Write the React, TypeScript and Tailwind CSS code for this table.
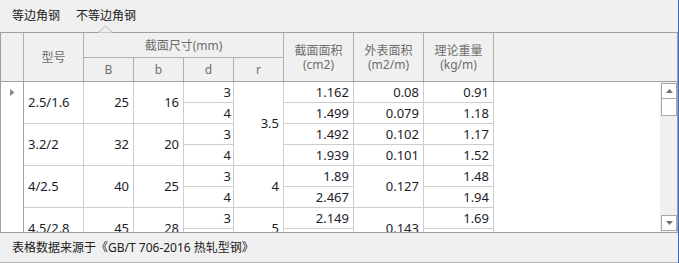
import React from "react";

const F = "font-['Noto_Sans','Noto_Sans_CJK_SC',sans-serif]";

type Cell = { t: string; span?: number; left?: boolean; pr?: string };

const cells: Cell[] = [
  { t: "2.5/1.6", span: 2, left: true },
  { t: "25", span: 2 },
  { t: "16", span: 2 },
  { t: "3", pr: "pr-[2px]" },
  { t: "3.5", span: 4 },
  { t: "1.162" },
  { t: "0.08" },
  { t: "0.91" },
  { t: "4", pr: "pr-[2px]" },
  { t: "1.499" },
  { t: "0.079" },
  { t: "1.18" },
  { t: "3.2/2", span: 2, left: true },
  { t: "32", span: 2 },
  { t: "20", span: 2 },
  { t: "3", pr: "pr-[2px]" },
  { t: "1.492" },
  { t: "0.102" },
  { t: "1.17" },
  { t: "4", pr: "pr-[2px]" },
  { t: "1.939" },
  { t: "0.101" },
  { t: "1.52" },
  { t: "4/2.5", span: 2, left: true },
  { t: "40", span: 2 },
  { t: "25", span: 2 },
  { t: "3", pr: "pr-[2px]" },
  { t: "4", span: 2 },
  { t: "1.89" },
  { t: "0.127", span: 2 },
  { t: "1.48" },
  { t: "4", pr: "pr-[2px]" },
  { t: "2.467" },
  { t: "1.94" },
  { t: "4.5/2.8", span: 2, left: true },
  { t: "45", span: 2 },
  { t: "28", span: 2 },
  { t: "3", pr: "pr-[2px]" },
  { t: "5", span: 2 },
  { t: "2.149" },
  { t: "0.143", span: 2 },
  { t: "1.69" },
  { t: "4", pr: "pr-[2px]" },
  { t: "2.806" },
  { t: "2.20" },
];

function spanClass(n?: number) {
  if (n === 2) return "row-span-2";
  if (n === 4) return "row-span-4";
  return "";
}

export default function App() {
  return (
    <div
      className={`${F} w-[679px] h-[263px] bg-[#f0f0f0] border-r border-[#3f6fae] flex flex-col relative overflow-hidden text-[#1c1c28]`}
    >
      {/* Tabs */}
      <div className="h-[32px] flex items-center pl-[12px] gap-[16px] text-[12px] text-[#202020] pb-[1px]">
        <span>等边角钢</span>
        <span>不等边角钢</span>
      </div>
      <svg
        className="absolute left-[98px] top-[25px]"
        width="15"
        height="8"
        viewBox="0 0 15 8"
      >
        <polyline
          points="0.5,7.5 7.5,1 14.5,7.5"
          fill="#f0f0f0"
          stroke="#b8b8b8"
          strokeWidth="1"
        />
      </svg>

      {/* Grid frame */}
      <div className="h-[201px] border border-[#a0a0a0] flex flex-col">
        {/* Header */}
        <div className="h-[49px] flex border-b border-[#a0a0a0] text-[12px] text-[#6e6e6e]">
          <div className="grid grid-cols-[23px_60px_50px_50px_50px_50px_70px_70px_70px] grid-rows-[25px_23px] w-[493px]">
            <div className="row-span-2 border-r border-[#b0b0b0]" />
            <div className="row-span-2 border-r border-[#b0b0b0] flex items-center justify-center pt-[1px]">
              型号
            </div>
            <div className="col-span-4 border-r border-b border-[#b0b0b0] flex items-center justify-center pt-[2px]">
              截面尺寸(mm)
            </div>
            {[
              ["截面面积", "(cm2)"],
              ["外表面积", "(m2/m)"],
              ["理论重量", "(kg/m)"],
            ].map(([a, b]) => (
              <div
                key={a}
                className="row-span-2 border-r border-[#b0b0b0] flex flex-col items-center justify-center leading-[14px] pt-[1px]"
              >
                <span>{a}</span>
                <span>{b}</span>
              </div>
            ))}
            {["B", "b", "d", "r"].map((h) => (
              <div
                key={h}
                className="border-r border-[#b0b0b0] flex items-center justify-center"
              >
                {h}
              </div>
            ))}
          </div>
          <div className="flex-1" />
        </div>

        {/* Body */}
        <div className="h-[150px] flex">
          <div className="w-[493px] h-[150px] overflow-hidden bg-white">
            <div className="grid grid-cols-[23px_60px_50px_50px_50px_50px_70px_70px_70px] grid-rows-[repeat(8,21px)] text-[13px]">
              <div className="row-span-8 border-r border-[#a0a0a0] bg-white pl-[9px] pt-[7px]">
                <svg width="5" height="7" viewBox="0 0 5 7">
                  <polygon points="0,0 4.5,3.5 0,7" fill="#8a8a8a" />
                </svg>
              </div>
              {cells.map((c, i) => (
                <div
                  key={i}
                  className={`${spanClass(c.span)} border-r border-b border-[#cdcdcd] flex items-center leading-none ${
                    c.left
                      ? "justify-start pl-[4px]"
                      : `justify-end ${c.pr ?? "pr-[4px]"}`
                  }`}
                >
                  {c.t}
                </div>
              ))}
            </div>
          </div>
          <div className="flex-1 bg-white" />
          {/* Scrollbar */}
          <div className="w-[17px] bg-[#f0f0f0] pl-[1px] pt-[1px] pb-[1px] flex flex-col">
            <div className="w-[16px] h-[16px] bg-white border border-[#a8a8a8] flex items-center justify-center">
              <svg width="7" height="4" viewBox="0 0 7 4">
                <polygon points="0,4 3.5,0 7,4" fill="#707070" />
              </svg>
            </div>
            <div className="w-[16px] h-[17px] bg-white border border-[#a8a8a8] border-t-0" />
            <div className="flex-1" />
            <div className="w-[16px] h-[16px] bg-white border border-[#a8a8a8] flex items-center justify-center">
              <svg width="7" height="4" viewBox="0 0 7 4">
                <polygon points="0,0 7,0 3.5,4" fill="#707070" />
              </svg>
            </div>
          </div>
        </div>
      </div>

      {/* Footer */}
      <div className="h-[30px] border-b border-[#b4b4b4] flex items-center pl-[12px] text-[12px] text-[#202020]">
        表格数据来源于《GB/T 706-2016 热轧型钢》
      </div>
    </div>
  );
}
